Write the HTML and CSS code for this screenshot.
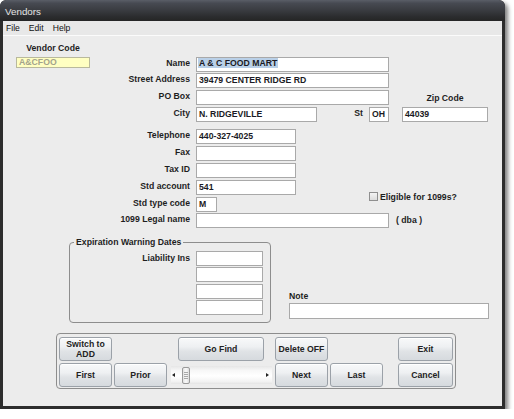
FILE: index.html
```html
<!DOCTYPE html>
<html>
<head>
<meta charset="utf-8">
<title>Vendors</title>
<link rel="stylesheet" href="styles.css">
</head>
<body>
<div class="window">
  <div class="titlebar">Vendors</div>
  <div class="frame">
    <div class="menubar"><span>File</span><span>Edit</span><span>Help</span></div>
    <div class="content">
      <div class="form">
        <div class="vc-label r1 c-vend">Vendor Code</div>
        <div class="field vendor r2 c-vend">A&amp;CFOO</div>

        <div class="lbl r2 c-lbl">Name</div>
        <div class="field name r2 c-wide"><span class="sel">A &amp; C FOOD MART</span></div>

        <div class="lbl r3 c-lbl">Street Address</div>
        <div class="field r3 c-wide">39479 CENTER RIDGE RD</div>

        <div class="lbl r4 c-lbl">PO Box</div>
        <div class="field r4 c-wide"></div>
        <div class="zip-label r4 c-zip">Zip Code</div>

        <div class="lbl r5 c-lbl">City</div>
        <div class="field r5 c-city">N. RIDGEVILLE</div>
        <div class="lbl r5 c-st">St</div>
        <div class="field r5 c-stf">OH</div>
        <div class="field r5 c-zip">44039</div>

        <div class="lbl r6 c-lbl">Telephone</div>
        <div class="field mid r6 c-city">440-327-4025</div>

        <div class="lbl r7 c-lbl">Fax</div>
        <div class="field mid r7 c-city"></div>

        <div class="lbl r8 c-lbl">Tax ID</div>
        <div class="field mid r8 c-city"></div>

        <div class="lbl r9 c-lbl">Std account</div>
        <div class="field mid r9 c-city">541</div>

        <div class="lbl r10 c-lbl">Std type code</div>
        <div class="field tiny r10 c-city">M</div>

        <div class="check r9-10 c-check"><span class="box"></span><span>Eligible for 1099s?</span></div>

        <div class="lbl r11 c-lbl">1099 Legal name</div>
        <div class="field r11 c-wide"></div>
        <div class="dba r11 c-dba">( dba )</div>
      </div>

      <div class="lower">
        <fieldset class="exp">
          <legend>Expiration Warning Dates</legend>
          <div class="exp-grid">
            <div class="exp-lbl">Liability Ins</div>
            <div class="field exp-f"></div>
            <div class="field exp-f"></div>
            <div class="field exp-f"></div>
            <div class="field exp-f"></div>
          </div>
        </fieldset>
        <div class="note">
          <div class="note-lbl">Note</div>
          <div class="field note-f"></div>
        </div>
      </div>

      <div class="buttons">
        <div class="btn b-switch">Switch to<br>ADD</div>
        <div class="btn b-find">Go Find</div>
        <div class="btn b-del">Delete OFF</div>
        <div class="btn b-exit">Exit</div>
        <div class="btn b-first">First</div>
        <div class="btn b-prior">Prior</div>
        <div class="scroll">
          <span class="arr-l"></span>
          <span class="thumb"><span class="grip"></span></span>
          <span class="track"></span>
          <span class="arr-r"></span>
        </div>
        <div class="btn b-next">Next</div>
        <div class="btn b-last">Last</div>
        <div class="btn b-cancel">Cancel</div>
      </div>
    </div>
  </div>
</div>
</body>
</html>
```

FILE: styles.css
```css
* { box-sizing: border-box; }
html, body { margin: 0; padding: 0; background: #ffffff; }
body { font-family: "Liberation Sans", Arial, sans-serif; }

.window {
  width: 505px;
  height: 409px;
  border-radius: 6px 6px 0 0;
  box-shadow: 3px 3px 4px rgba(0,0,0,0.5);
  overflow: hidden;
  background: #2d2d2d;
}

.titlebar {
  height: 21px;
  padding: 3px 0 0 5px;
  line-height: 18px;
  font-size: 9.8px;
  color: #e4e4e4;
  background: linear-gradient(#5a5e67 0, #474a52 15%, #393b40 50%, #2b2c2e 80%, #252525 100%);
  border-radius: 6px 6px 0 0;
}

.frame {
  height: 388px;
  border: 3px solid #2d2d2d;
  border-top: 0;
  background: #ececec;
}

.menubar {
  height: 15px;
  background: #e8e8e8;
  border-bottom: 1px solid #fbfbfb;
  display: flex;
  gap: 9px;
  padding-left: 3px;
  font-size: 8.6px;
  line-height: 14px;
  color: #111;
}

.content { padding-top: 5px; }

.form {
  display: grid;
  grid-template-columns: 13px 74px 106px 121px 52px 20px 13px 86px;
  grid-template-rows: 16px 16px 17px 17px 22px 17px 17px 17px 17px 16px 16px;
  font-size: 8.7px;
  font-weight: bold;
  color: #1e1e1e;
}

.r1 { grid-row: 1; }
.r2 { grid-row: 2; }
.r3 { grid-row: 3; }
.r4 { grid-row: 4; }
.r5 { grid-row: 5; }
.r6 { grid-row: 6; }
.r7 { grid-row: 7; }
.r8 { grid-row: 8; }
.r9 { grid-row: 9; }
.r10 { grid-row: 10; }
.r9-10 { grid-row: 9 / 11; }
.r11 { grid-row: 11; }

.c-vend { grid-column: 2; }
.c-lbl { grid-column: 3; }
.c-wide { grid-column: 4 / 7; }
.c-city { grid-column: 4; }
.c-st { grid-column: 5; }
.c-stf { grid-column: 6; }
.c-zip { grid-column: 8; }
.c-check { grid-column: 6 / 9; }
.c-dba { grid-column: 7 / 9; }

.lbl {
  text-align: right;
  padding-right: 6px;
  line-height: 12px;
  white-space: nowrap;
}

.vc-label { text-align: center; line-height: 14px; white-space: nowrap; }
.zip-label { text-align: center; line-height: 17px; }

.field {
  height: 15px;
  background: #ffffff;
  border: 1px solid #a9a9a9;
  padding-left: 2px;
  font-size: 8.7px;
  font-weight: bold;
  line-height: 13px;
  color: #1a1a24;
  white-space: nowrap;
  overflow: hidden;
  align-self: start;
}

.field.vendor {
  height: 11px;
  line-height: 9px;
  background: #ffffc2;
  border-color: #b9b99c;
  color: #a3a38c;
}

.field.name { padding-left: 1px; }
.sel {
  display: inline-block;
  background: #b9d0e8;
  line-height: 10px;
  padding: 0 1px;
  vertical-align: 1px;
}

.field.mid { width: 100px; }
.field.tiny { width: 21px; }

.check {
  align-self: center;
  display: flex;
  align-items: center;
  gap: 2px;
  line-height: 10px;
}
.check .box {
  width: 9px;
  height: 9px;
  border: 1px solid #8f8f8f;
  background: linear-gradient(#f4f4f4, #dcdcdc);
}

.dba { padding-left: 7px; line-height: 14px; }

.lower {
  display: flex;
  margin-top: 7.5px;
  padding-left: 66px;
  font-size: 8.7px;
  font-weight: bold;
  color: #1e1e1e;
}

.exp {
  margin: 0;
  width: 202px;
  min-width: 0;
  padding: 0 6px 7px 4px;
  border: 1px solid #8d8d8d;
  border-radius: 4px;
}
.exp legend {
  padding: 0 2px;
  line-height: 11px;
  font-size: 8.7px;
  font-weight: bold;
}
.exp-grid {
  margin-top: 3px;
  display: grid;
  grid-template-columns: 122px 67px;
  grid-template-rows: repeat(4, 15px);
  row-gap: 1.5px;
}
.exp-lbl {
  grid-column: 1;
  grid-row: 1;
  text-align: right;
  padding-right: 6px;
  line-height: 15px;
}
.exp-f { grid-column: 2; }

.note {
  margin-left: 18px;
  margin-bottom: 4px;
  align-self: flex-end;
  display: flex;
  flex-direction: column;
}
.note-lbl { line-height: 11px; margin-bottom: 1.5px; }
.field.note-f { width: 200px; height: 16px; }

.buttons {
  margin: 10px 0 0 53px;
  width: 400px;
  height: 56px;
  border: 1px solid #8d8d8d;
  border-radius: 4px;
  padding: 3px 2px 1px 2px;
  display: grid;
  grid-template-columns: 53px 53px 104px 53px 53px 11px 55px;
  grid-template-rows: 24px 24px;
  gap: 2px;
}

.btn {
  border: 1px solid #9ba1a8;
  border-radius: 3px;
  background: linear-gradient(#f8f9fa 0, #eef0f2 40%, #e0e3e6 60%, #d6dade 100%);
  box-shadow: inset 0 1px 0 #ffffff;
  display: flex;
  align-items: center;
  justify-content: center;
  text-align: center;
  font-size: 8.7px;
  font-weight: bold;
  color: #222;
  line-height: 10px;
}

.b-switch { grid-row: 1; grid-column: 1; }
.b-find { grid-row: 1; grid-column: 3; width: 86px; justify-self: center; height: 23.5px; }
.b-del { grid-row: 1; grid-column: 4; height: 23.5px; }
.b-exit { grid-row: 1; grid-column: 7; }
.b-first { grid-row: 2; grid-column: 1; }
.b-prior { grid-row: 2; grid-column: 2; }
.b-next { grid-row: 2; grid-column: 4; }
.b-last { grid-row: 2; grid-column: 5; }
.b-cancel { grid-row: 2; grid-column: 7; }

.scroll {
  grid-row: 2;
  grid-column: 3;
  margin: 0 1px 0 2px;
  height: 18px;
  align-self: center;
  display: flex;
  align-items: center;
  padding: 0 3px 0 1px;
  background: linear-gradient(#e6e6e6 0, #f7f7f7 25%, #ffffff 55%, #f3f3f3 85%, #e4e4e4 100%);
}
.arr-l {
  width: 0; height: 0;
  border-top: 2.5px solid transparent;
  border-bottom: 2.5px solid transparent;
  border-right: 3px solid #222;
}
.arr-r {
  width: 0; height: 0;
  border-top: 2.5px solid transparent;
  border-bottom: 2.5px solid transparent;
  border-left: 3px solid #222;
}
.thumb {
  margin-left: 7px;
  width: 8px;
  height: 17px;
  border: 1px solid #9a9a9a;
  border-radius: 2px;
  background: linear-gradient(90deg, #e2e2e2, #fafafa 50%, #dedede);
  display: flex;
  align-items: center;
  justify-content: center;
}
.grip {
  width: 4px;
  height: 7px;
  background: repeating-linear-gradient(#a8a8a8 0, #a8a8a8 1px, transparent 1px, transparent 2px);
}
.track { flex: 1; }
```
